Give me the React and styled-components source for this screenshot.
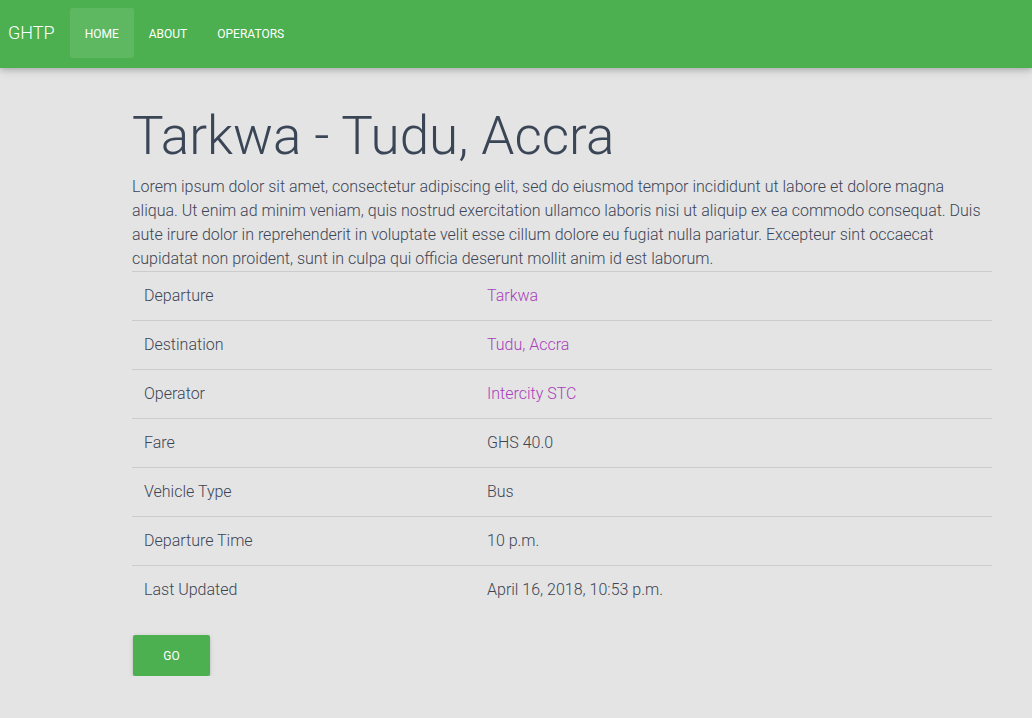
import React from 'react'
import styled, { createGlobalStyle } from 'styled-components'

const GlobalStyle = createGlobalStyle`
  html, body {
    margin: 0;
    padding: 0;
    background: #e4e4e4;
    font-family: Roboto, "Noto Sans", sans-serif;
    font-weight: 300;
    color: #3d4555;
  }
`

const Nav = styled.nav`
  height: 68px;
  background: #4caf50;
  display: flex;
  align-items: flex-start;
  padding-top: 8px;
  box-sizing: border-box;
  box-shadow: 0 2px 5px rgba(0, 0, 0, 0.16), 0 2px 10px rgba(0, 0, 0, 0.12);
`

const Brand = styled.a`
  color: #fff;
  font-size: 18px;
  font-weight: 300;
  line-height: 50px;
  padding: 0 15px 0 8px;
  text-decoration: none;
`

const NavLink = styled.a`
  height: 50px;
  box-sizing: border-box;
  display: flex;
  align-items: center;
  padding: 2px 15px 0;
  color: #fff;
  font-size: 12px;
  font-weight: 400;
  text-transform: uppercase;
  text-decoration: none;
  border-radius: 2px;
  background: ${p => (p.$active ? 'rgba(255, 255, 255, 0.1)' : 'transparent')};
`

const Container = styled.main`
  width: 860px;
  margin: 0 0 0 132px;
  padding-top: 36px;
`

const Title = styled.h1`
  font-size: 53px;
  font-weight: 300;
  line-height: 64px;
  margin: 0 0 7px;
  color: #3a4556;
`

const Lead = styled.p`
  font-size: 16px;
  line-height: 24px;
  margin: 0;
  color: #3d4555;
`

const Table = styled.table`
  width: 100%;
  border-collapse: collapse;
`

const Row = styled.tr`
  border-top: 1px solid rgba(0, 0, 0, 0.1);
`

const Label = styled.td`
  width: 319px;
  padding: 14px 12px 15px;
  font-size: 16px;
  line-height: 19px;
`

const Value = styled.td`
  padding: 14px 12px 15px;
  font-size: 16px;
  line-height: 19px;
  color: ${p => (p.$link ? '#a83fbb' : '#3d4555')};
`

const Button = styled.button`
  margin-top: 21px;
  margin-left: 1px;
  width: 77px;
  height: 41px;
  border: none;
  border-radius: 2px;
  background: #4caf50;
  color: #fff;
  font-family: Roboto, sans-serif;
  font-size: 12px;
  font-weight: 400;
  text-transform: uppercase;
  box-shadow: 0 2px 2px rgba(0, 0, 0, 0.14), 0 1px 5px rgba(0, 0, 0, 0.12);
`

const rows = [
  ['Departure', 'Tarkwa', true],
  ['Destination', 'Tudu, Accra', true],
  ['Operator', 'Intercity STC', true],
  ['Fare', 'GHS 40.0'],
  ['Vehicle Type', 'Bus'],
  ['Departure Time', '10 p.m.'],
  ['Last Updated', 'April 16, 2018, 10:53 p.m.']
]

const App = () => (
  <>
    <GlobalStyle />
    <Nav>
      <Brand>GHTP</Brand>
      <NavLink $active>Home</NavLink>
      <NavLink>About</NavLink>
      <NavLink>Operators</NavLink>
    </Nav>
    <Container>
      <Title>Tarkwa - Tudu, Accra</Title>
      <Lead>
        Lorem ipsum dolor sit amet, consectetur adipiscing elit, sed do eiusmod tempor incididunt ut
        labore et dolore magna aliqua. Ut enim ad minim veniam, quis nostrud exercitation ullamco
        laboris nisi ut aliquip ex ea commodo consequat. Duis aute irure dolor in reprehenderit in
        voluptate velit esse cillum dolore eu fugiat nulla pariatur. Excepteur sint occaecat
        cupidatat non proident, sunt in culpa qui officia deserunt mollit anim id est laborum.
      </Lead>
      <Table>
        <tbody>
          {rows.map(([label, value, link]) => (
            <Row key={label}>
              <Label>{label}</Label>
              <Value $link={link}>{value}</Value>
            </Row>
          ))}
        </tbody>
      </Table>
      <Button>Go</Button>
    </Container>
  </>
)

export default App
